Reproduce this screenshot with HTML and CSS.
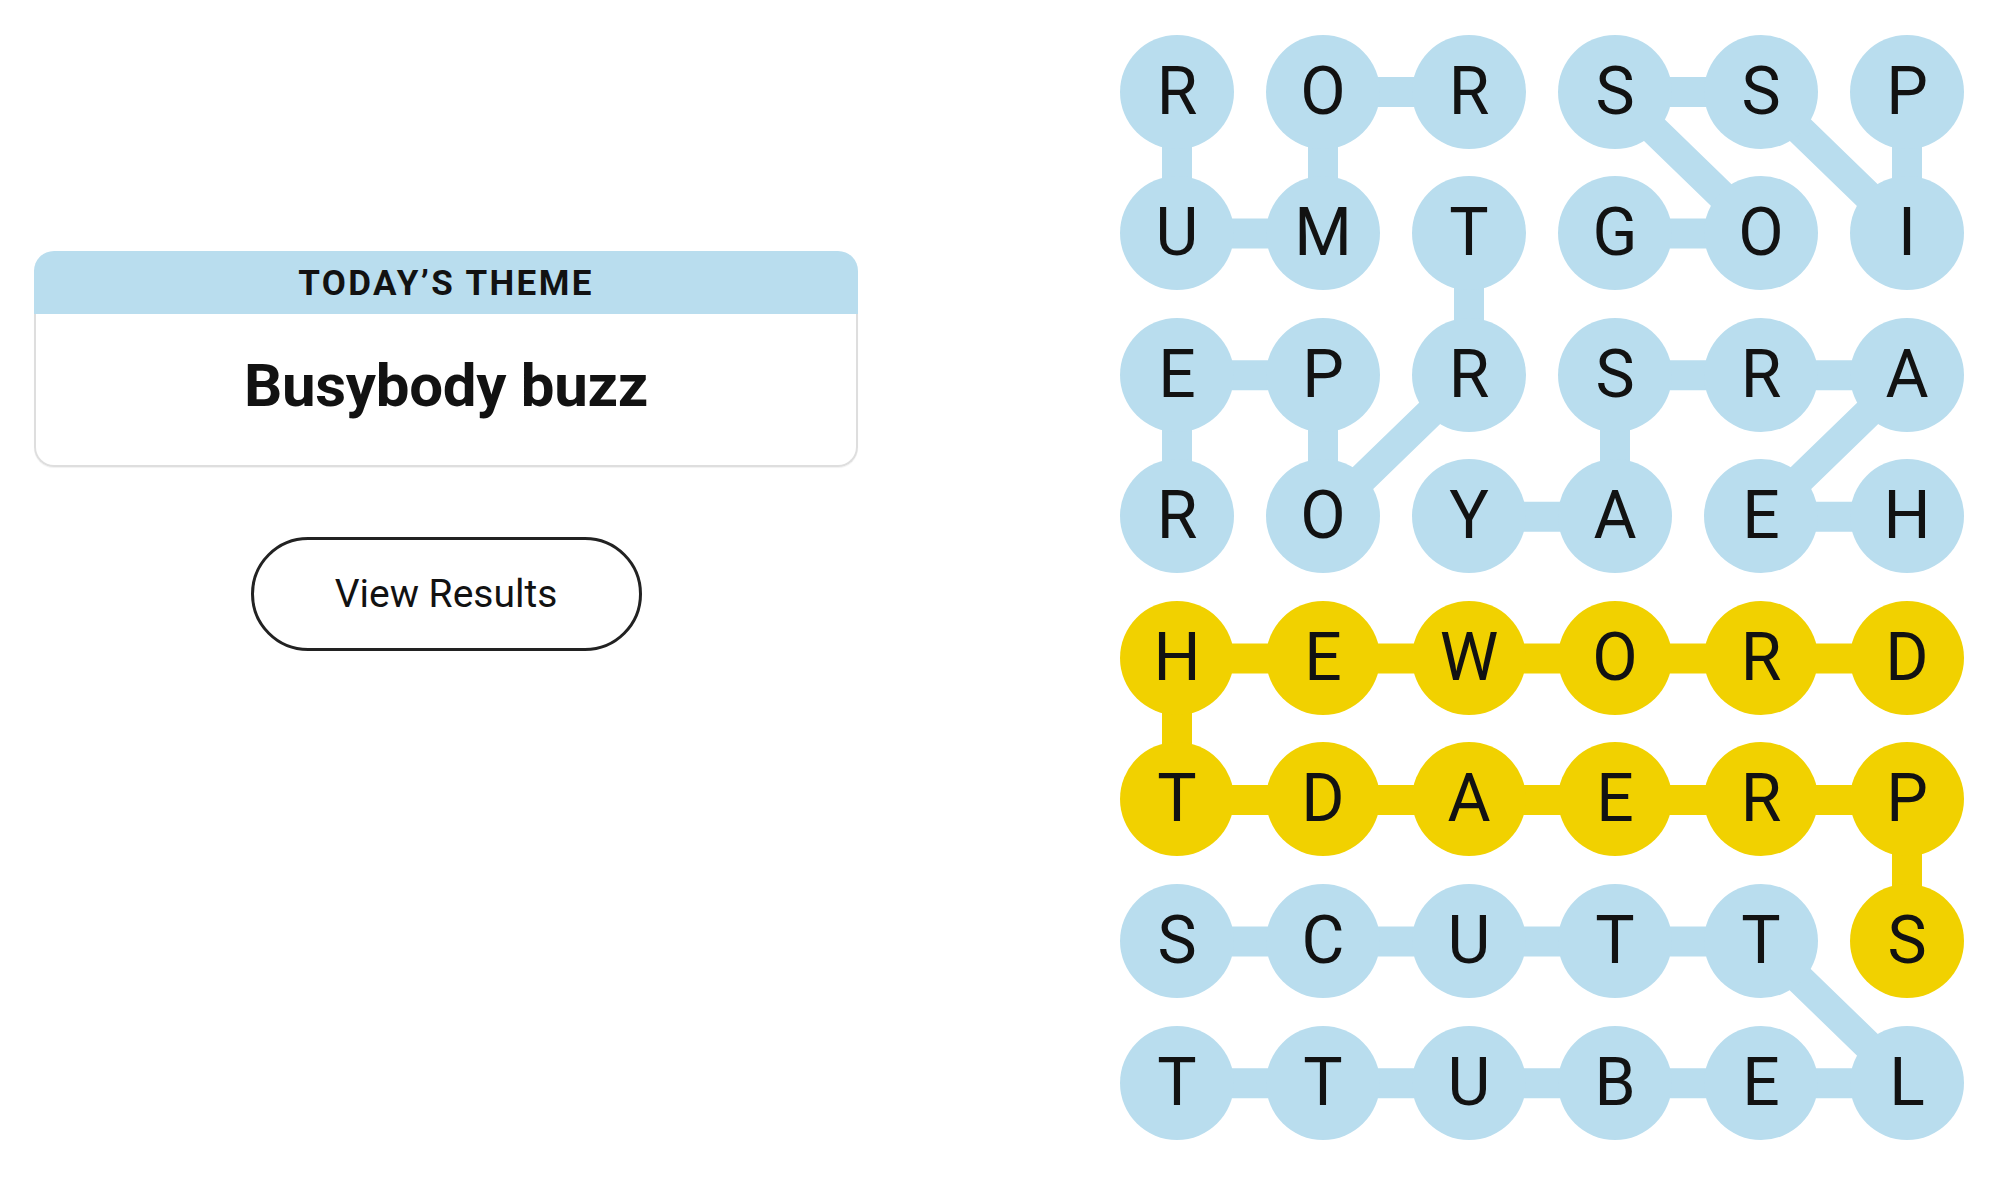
FILE: index.html
```html
<!DOCTYPE html>
<html lang="en">
<head>
<meta charset="utf-8">
<title>Strands</title>
<link rel="stylesheet" href="styles.css">
</head>
<body>
<main class="page">
  <section class="side">
    <div class="theme-card">
      <div class="theme-head">TODAY’S THEME</div>
      <div class="theme-body">Busybody buzz</div>
    </div>
    <button class="results-btn" type="button">View Results</button>
  </section>
  <section class="board">
    <svg class="links" viewBox="0 0 844 1105.2" width="844" height="1105.2" aria-hidden="true">
      <g class="blue" fill="none" stroke="#b9ddee" stroke-width="30">
        <polyline points="57,57 57,198.6 203,198.6 203,57 349,57"/>
        <polyline points="495,198.6 641,198.6 495,57 641,57 787,198.6 787,57"/>
        <polyline points="349,198.6 349,340.2 203,481.8 203,340.2 57,340.2 57,481.8"/>
        <polyline points="787,481.8 641,481.8 787,340.2 641,340.2 495,340.2 495,481.8 349,481.8"/>
        <polyline points="57,906.6 641,906.6 787,1048.2 57,1048.2"/>
      </g>
      <g class="yellow" fill="none" stroke="#f1d100" stroke-width="30">
        <polyline points="787,623.4 57,623.4 57,765 787,765 787,906.6"/>
      </g>
    </svg>
    <div class="grid">
      <span class="cell">R</span><span class="cell">O</span><span class="cell">R</span><span class="cell">S</span><span class="cell">S</span><span class="cell">P</span>
      <span class="cell">U</span><span class="cell">M</span><span class="cell">T</span><span class="cell">G</span><span class="cell">O</span><span class="cell">I</span>
      <span class="cell">E</span><span class="cell">P</span><span class="cell">R</span><span class="cell">S</span><span class="cell">R</span><span class="cell">A</span>
      <span class="cell">R</span><span class="cell">O</span><span class="cell">Y</span><span class="cell">A</span><span class="cell">E</span><span class="cell">H</span>
      <span class="cell gold">H</span><span class="cell gold">E</span><span class="cell gold">W</span><span class="cell gold">O</span><span class="cell gold">R</span><span class="cell gold">D</span>
      <span class="cell gold">T</span><span class="cell gold">D</span><span class="cell gold">A</span><span class="cell gold">E</span><span class="cell gold">R</span><span class="cell gold">P</span>
      <span class="cell">S</span><span class="cell">C</span><span class="cell">U</span><span class="cell">T</span><span class="cell">T</span><span class="cell gold">S</span>
      <span class="cell">T</span><span class="cell">T</span><span class="cell">U</span><span class="cell">B</span><span class="cell">E</span><span class="cell">L</span>
    </div>
  </section>
</main>
</body>
</html>
```

FILE: styles.css
```css
html, body {
  margin: 0;
  padding: 0;
  background: #ffffff;
}

body {
  font-family: Roboto, "Liberation Sans", Arial, sans-serif;
  color: #121212;
}

.page {
  display: flex;
  align-items: flex-start;
  width: 2000px;
  height: 1186px;
  overflow: hidden;
}

.side {
  width: 824px;
  margin-left: 34px;
  padding-top: 251px;
  display: flex;
  flex-direction: column;
  align-items: center;
}

.theme-card {
  width: 824px;
  display: flex;
  flex-direction: column;
}

.theme-head {
  height: 63px;
  background: #b9ddee;
  border-radius: 20px 20px 0 0;
  display: flex;
  align-items: center;
  justify-content: center;
  font-size: 35px;
  font-weight: 700;
  letter-spacing: 2.4px;
  color: #121212;
  padding-top: 1px;
  box-sizing: border-box;
}

.theme-body {
  height: 153px;
  box-sizing: border-box;
  border: 2px solid #dedede;
  border-top: none;
  border-radius: 0 0 20px 20px;
  box-shadow: 0 1px 1px rgba(0, 0, 0, 0.06);
  display: flex;
  align-items: center;
  justify-content: center;
  padding-bottom: 8px;
  font-size: 60px;
  font-weight: 700;
  letter-spacing: -0.3px;
  color: #121212;
}

.results-btn {
  margin-top: 70px;
  width: 391px;
  height: 114px;
  border: 3px solid #222222;
  border-radius: 57px;
  background: #ffffff;
  font-family: Roboto, "Liberation Sans", Arial, sans-serif;
  font-size: 39px;
  font-weight: 400;
  color: #121212;
  padding: 0;
}

.board {
  position: relative;
  margin-left: 262px;
  margin-top: 34.5px;
  width: 844px;
  height: 1105.2px;
}

.links {
  position: absolute;
  left: 0;
  top: 0;
  z-index: 0;
}

.grid {
  position: relative;
  z-index: 1;
  display: grid;
  grid-template-columns: repeat(6, 114px);
  grid-auto-rows: 114px;
  column-gap: 32px;
  row-gap: 27.6px;
}

.cell {
  width: 114px;
  height: 114px;
  border-radius: 50%;
  background: #b9ddee;
  display: flex;
  align-items: center;
  justify-content: center;
  font-size: 66px;
  line-height: 1;
  font-weight: 400;
  color: #121212;
}

.cell.gold {
  background: #f1d100;
}
```
